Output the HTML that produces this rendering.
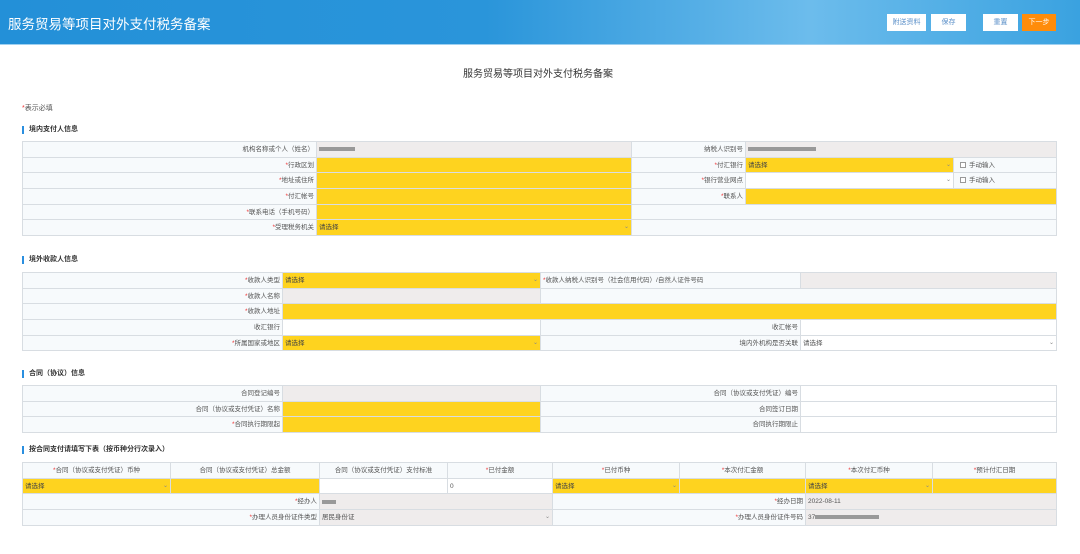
<!DOCTYPE html>
<html><head><meta charset="utf-8"><style>
*{margin:0;padding:0;box-sizing:border-box}
body{width:1080px;height:554px;overflow:hidden;background:#fff;font-family:"Liberation Sans","Noto Sans CJK SC",sans-serif;color:#555;position:relative}
.hd{position:absolute;left:0;top:0;width:1080px;height:45px;background:linear-gradient(90deg,#2390d8 0%,#2a95da 45%,#6cbcec 75%,#3aa2e0 100%);border-bottom:1px solid #9fd0f0}
.hd h1{position:absolute;left:8px;top:13px;font-size:13.5px;font-weight:normal;color:#fff}
.btn{position:absolute;top:14px;height:17px;background:#fff;color:#5a8fc8;font-size:7px;text-align:center;line-height:17px}
.t{position:absolute;font-size:7px;white-space:nowrap}
.sec{position:absolute;left:22px;font-size:7px;font-weight:bold;color:#333;border-left:2px solid #2a8fe0;padding-left:5px;line-height:8px}
table{position:absolute;left:22px;width:1035px;border-collapse:collapse;table-layout:fixed;font-size:6.5px}
td{border:1px solid #d8dde2;height:15.7px;line-height:13px;background:#f7fafc;padding:0 2px;white-space:nowrap;overflow:hidden;vertical-align:middle}
td.l{text-align:right}
td.y{background:#fed31f;color:#444}
td.g{background:#efecec}
td.w{background:#fff}
td.c{text-align:center}
.r{color:#e33}
.ar{float:right;color:#888;font-size:6px}
.cb{display:inline-block;width:6px;height:6px;border:1px solid #999;background:#fff;margin:0 3px 0 4px;vertical-align:-1px}
.blur{display:inline-block;background:#999;height:4px;vertical-align:middle}
</style></head><body>
<div class="hd"><h1>服务贸易等项目对外支付税务备案</h1>
<div class="btn" style="left:887px;width:39px">附送资料</div>
<div class="btn" style="left:931px;width:35px">保存</div>
<div class="btn" style="left:983px;width:35px">重置</div>
<div class="btn" style="left:1022px;width:34px;background:#ff8c0a;color:#fff">下一步</div>
</div>
<div class="t" style="left:463px;top:65px;font-size:10px;color:#333">服务贸易等项目对外支付税务备案</div>
<div class="t" style="left:22px;top:103px"><span class="r">*</span>表示必填</div>

<div class="sec" style="top:126px">境内支付人信息</div>
<table style="top:141px"><colgroup><col style="width:294px"><col style="width:315px"><col style="width:114px"><col style="width:208px"><col></colgroup>
<tr><td class="l">机构名称或个人（姓名）</td><td class="g"><span class="blur" style="width:36px"></span></td><td class="l">纳税人识别号</td><td class="g" colspan="2"><span class="blur" style="width:68px"></span></td></tr>
<tr><td class="l"><span class="r">*</span>行政区划</td><td class="y"></td><td class="l"><span class="r">*</span>付汇银行</td><td class="y">请选择<span class="ar">⌄</span></td><td><span class="cb"></span>手动输入</td></tr>
<tr><td class="l"><span class="r">*</span>地址或住所</td><td class="y"></td><td class="l"><span class="r">*</span>银行营业网点</td><td class="w"><span class="ar">⌄</span></td><td><span class="cb"></span>手动输入</td></tr>
<tr><td class="l"><span class="r">*</span>付汇帐号</td><td class="y"></td><td class="l"><span class="r">*</span>联系人</td><td class="y" colspan="2"></td></tr>
<tr><td class="l"><span class="r">*</span>联系电话（手机号码）</td><td class="y"></td><td colspan="3"></td></tr>
<tr><td class="l"><span class="r">*</span>受理税务机关</td><td class="y">请选择<span class="ar">⌄</span></td><td colspan="3"></td></tr>
</table>

<div class="sec" style="top:256px">境外收款人信息</div>
<table style="top:272px"><colgroup><col style="width:260px"><col style="width:258px"><col style="width:260px"><col></colgroup>
<tr><td class="l"><span class="r">*</span>收款人类型</td><td class="y">请选择<span class="ar">⌄</span></td><td><span class="r">*</span>收款人纳税人识别号（社会信用代码）/自然人证件号码</td><td class="g"></td></tr>
<tr><td class="l"><span class="r">*</span>收款人名称</td><td class="g"></td><td colspan="2"></td></tr>
<tr><td class="l"><span class="r">*</span>收款人地址</td><td class="y" colspan="3"></td></tr>
<tr><td class="l">收汇银行</td><td class="w"></td><td class="l">收汇帐号</td><td class="w"></td></tr>
<tr><td class="l"><span class="r">*</span>所属国家或地区</td><td class="y">请选择<span class="ar">⌄</span></td><td class="l">境内外机构是否关联</td><td class="w">请选择<span class="ar">⌄</span></td></tr>
</table>

<div class="sec" style="top:370px">合同（协议）信息</div>
<table style="top:385px"><colgroup><col style="width:260px"><col style="width:258px"><col style="width:260px"><col></colgroup>
<tr><td class="l">合同登记编号</td><td class="g"></td><td class="l">合同（协议或支付凭证）编号</td><td class="w"></td></tr>
<tr><td class="l">合同（协议或支付凭证）名称</td><td class="y"></td><td class="l">合同签订日期</td><td class="w"></td></tr>
<tr><td class="l"><span class="r">*</span>合同执行期限起</td><td class="y"></td><td class="l">合同执行期限止</td><td class="w"></td></tr>
</table>

<div class="sec" style="top:446px">按合同支付请填写下表（按币种分行次录入）</div>
<table style="top:462px"><colgroup><col style="width:148px"><col style="width:149px"><col style="width:128px"><col style="width:105px"><col style="width:127px"><col style="width:126px"><col style="width:127px"><col></colgroup>
<tr><td class="c"><span class="r">*</span>合同（协议或支付凭证）币种</td><td class="c">合同（协议或支付凭证）总金额</td><td class="c">合同（协议或支付凭证）支付标准</td><td class="c"><span class="r">*</span>已付金额</td><td class="c"><span class="r">*</span>已付币种</td><td class="c"><span class="r">*</span>本次付汇金额</td><td class="c"><span class="r">*</span>本次付汇币种</td><td class="c"><span class="r">*</span>预计付汇日期</td></tr>
<tr><td class="y">请选择<span class="ar">⌄</span></td><td class="y"></td><td class="w"></td><td class="w">0</td><td class="y">请选择<span class="ar">⌄</span></td><td class="y"></td><td class="y">请选择<span class="ar">⌄</span></td><td class="y"></td></tr>
<tr><td class="l" colspan="2"><span class="r">*</span>经办人</td><td class="g" colspan="2"><span class="blur" style="width:14px"></span></td><td class="l" colspan="2"><span class="r">*</span>经办日期</td><td class="g" colspan="2">2022-08-11</td></tr>
<tr><td class="l" colspan="2"><span class="r">*</span>办理人员身份证件类型</td><td class="g" colspan="2">居民身份证<span class="ar">⌄</span></td><td class="l" colspan="2"><span class="r">*</span>办理人员身份证件号码</td><td class="g" colspan="2">37<span class="blur" style="width:64px"></span></td></tr>
</table>
</body></html>
